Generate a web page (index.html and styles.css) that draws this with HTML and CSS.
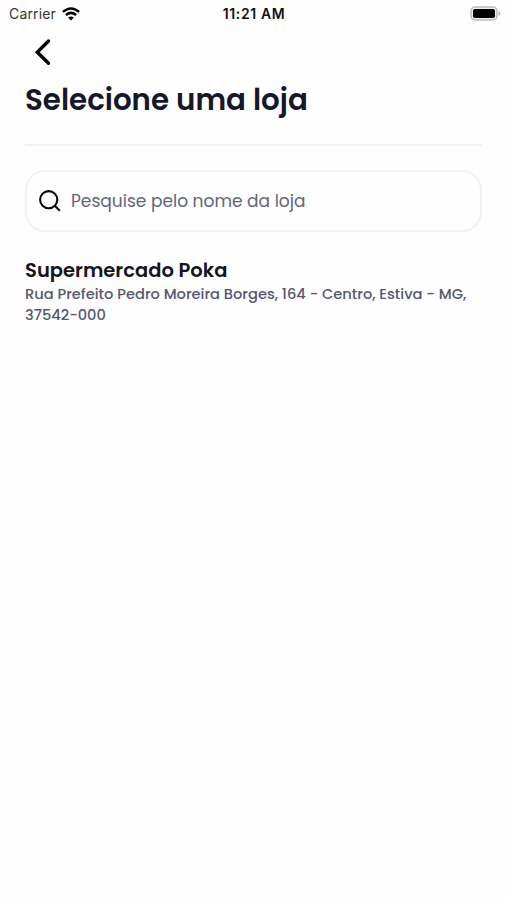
FILE: index.html
```html
<!DOCTYPE html>
<html lang="pt-BR">
<head>
<meta charset="utf-8">
<meta name="viewport" content="width=device-width, initial-scale=1">
<title>Selecione uma loja</title>
<link rel="stylesheet" href="styles.css">
</head>
<body>
<header class="status">
  <div class="carrier"><span>Carrier</span>
    <svg class="wifi" width="18" height="14" viewBox="0 0 18 14" fill="none" stroke="#000" stroke-width="2.5"><path d="M.9 4.9Q9-2 17.1 4.9M3.9 8Q9 3.8 14.1 8"/><path d="M9 13.5 6.1 10.6Q9 8.4 11.9 10.6Z" fill="#000" stroke="none"/></svg>
  </div>
  <time class="clock">11:21 AM</time>
  <svg class="battery" width="31" height="15" viewBox="0 0 31 15"><rect x="1" y="1" width="26" height="13" rx="4" fill="#eee" stroke="#bdbdbd" stroke-width="1.5"/><rect x="3" y="3" width="22" height="9" rx="1.8"/><path d="M28.5 5.2Q30.5 5.8 30.5 7.5T28.5 9.8Z" fill="#b5b5b5"/></svg>
</header>
<main class="screen">
  <button class="back" aria-label="Voltar"><svg width="18" height="28" viewBox="0 0 18 28" fill="none" stroke="#000" stroke-width="3.4" stroke-linecap="round" stroke-linejoin="miter"><path d="M14.5 3 3.3 14.2 14.5 25.2"/></svg></button>
  <h1 class="title"><span>Selecione uma loja</span></h1>
  <div class="search">
    <svg width="22" height="22" viewBox="0 0 22 22" fill="none" stroke="#050505" stroke-width="2.1"><circle cx="9.7" cy="9.7" r="8.6"/><path d="m15.8 15.8 5 5"/></svg>
    <span class="placeholder">Pesquise pelo nome da loja</span>
  </div>
  <section class="store">
    <h2 class="name"><span>Supermercado Poka</span></h2>
    <p class="address"><span class="street">Rua Prefeito Pedro Moreira Borges, 164 - Centro, Estiva - MG,</span><br><span class="zip">37542-000</span></p>
  </section>
</main>
</body>
</html>
```
FILE: styles.css
```css
* { box-sizing: border-box; }
body { margin: 0; min-height: 900px; background: #fefefe; color: #161829; font-family: Poppins, Inter, sans-serif; }
h1, h2, p { margin: 0; }
.status { display: grid; grid-template-columns: 1fr auto 1fr; align-items: center; height: 27px; padding: 0 6px 0 9px; color: #111; font-family: Inter, sans-serif; font-size: 14px; white-space: nowrap; }
.carrier { display: flex; align-items: center; gap: 6px; color: #333; letter-spacing: .15px; }
.clock { font-weight: 600; letter-spacing: .6px; margin-right: 2px; }
.battery { justify-self: end; }
.screen { padding: 0 25px; }
.back { display: block; width: 34px; height: 51px; margin: 0; padding: 0 0 1px 2px; border: 0; background: none; line-height: 0; }
.title { height: 68px; border-bottom: 2px solid #f2f3f4; font-size: 29.3px; line-height: 44px; font-weight: 600; white-space: nowrap; }
.search { display: flex; align-items: center; gap: 10px; height: 62px; margin-top: 24px; padding: 0 12px; border: 2px solid #f0f2f3; border-radius: 20px; }
.placeholder { color: #636677; font-size: 17.05px; line-height: 26px; white-space: nowrap; }
.store { padding-top: 25px; }
.name { color: #14161f; font-size: 19.5px; line-height: 27px; font-weight: 600; white-space: nowrap; }
.address { color: #555870; font-size: 14.65px; line-height: 20.5px; font-weight: 500; white-space: nowrap; }
```
